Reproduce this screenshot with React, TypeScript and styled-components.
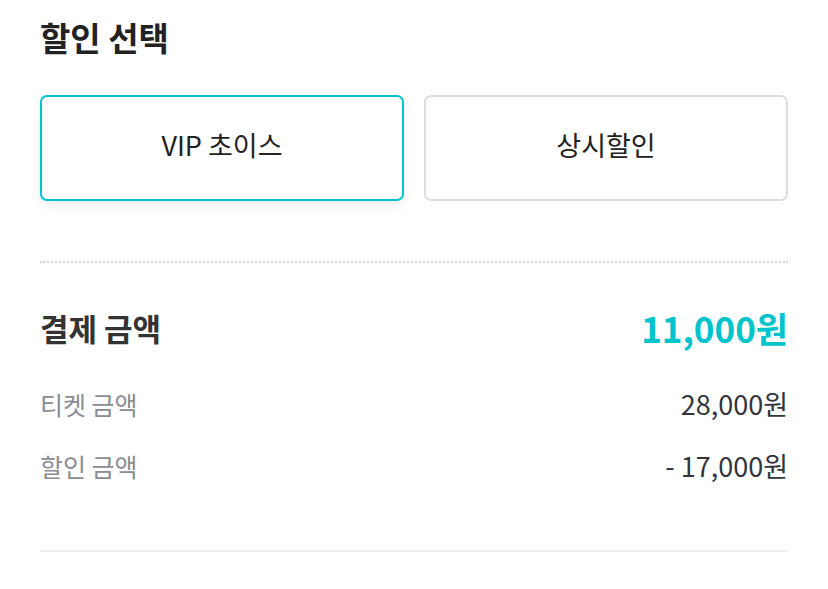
import React, { useState } from "react";
import styled, { createGlobalStyle } from "styled-components";

const GlobalStyle = createGlobalStyle`
  html, body {
    margin: 0;
    padding: 0;
    background: #ffffff;
  }
  body {
    font-family: "Noto Sans CJK KR", "Noto Sans", sans-serif;
    -webkit-font-smoothing: antialiased;
  }
  * { box-sizing: border-box; }
`;

const Page = styled.div`
  padding: 15px 40px 0;
`;

const Title = styled.h2`
  margin: 0;
  font-size: 33px;
  line-height: 44px;
  font-weight: 700;
  color: #222222;
`;

const Options = styled.div`
  display: grid;
  grid-template-columns: 1fr 1fr;
  gap: 20px;
  margin-top: 36px;
`;

const Option = styled.button<{ $active: boolean }>`
  height: 106px;
  border-radius: 7px;
  border: 2px solid ${(p) => (p.$active ? "#00c3cc" : "#dddddd")};
  background: #ffffff;
  box-shadow: ${(p) => (p.$active ? "0 5px 12px rgba(0, 0, 0, 0.07)" : "none")};
  font-family: inherit;
  font-size: 27px;
  line-height: 36px;
  font-weight: 400;
  color: #222222;
  cursor: pointer;
  padding: 0 0 6px;
`;

const DottedDivider = styled.hr`
  margin: 60px 0 0;
  border: 0;
  border-top: 2px dotted #d6d6d6;
  height: 0;
`;

const Summary = styled.div`
  display: flex;
  flex-direction: column;
  padding-top: 45px;
`;

const Row = styled.div<{ $gap?: number }>`
  display: flex;
  justify-content: space-between;
  align-items: center;
  margin-top: ${(p) => p.$gap ?? 0}px;
`;

const TotalLabel = styled.span`
  font-size: 31px;
  line-height: 40px;
  font-weight: 700;
  color: #333333;
`;

const TotalValue = styled.span`
  font-size: 35px;
  line-height: 40px;
  font-weight: 700;
  color: #00c3cc;
`;

const Label = styled.span`
  font-size: 25px;
  line-height: 36px;
  color: #8a8c94;
`;

const Value = styled.span`
  font-size: 27px;
  line-height: 36px;
  color: #33353d;
`;

const BottomDivider = styled.div`
  margin-top: 66px;
  height: 2px;
  background: #eeeeee;
`;

export default function App() {
  const [selected, setSelected] = useState<"vip" | "regular">("vip");
  return (
    <>
      <GlobalStyle />
      <Page>
        <Title>할인 선택</Title>
        <Options>
          <Option $active={selected === "vip"} onClick={() => setSelected("vip")}>
            VIP 초이스
          </Option>
          <Option $active={selected === "regular"} onClick={() => setSelected("regular")}>
            상시할인
          </Option>
        </Options>
        <DottedDivider />
        <Summary>
          <Row>
            <TotalLabel>결제 금액</TotalLabel>
            <TotalValue>11,000원</TotalValue>
          </Row>
          <Row $gap={38}>
            <Label>티켓 금액</Label>
            <Value>28,000원</Value>
          </Row>
          <Row $gap={26}>
            <Label>할인 금액</Label>
            <Value>- 17,000원</Value>
          </Row>
        </Summary>
        <BottomDivider />
      </Page>
    </>
  );
}
